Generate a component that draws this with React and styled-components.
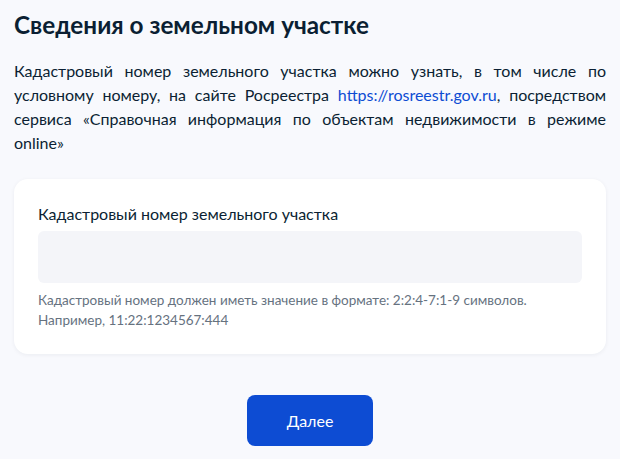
import styled, { createGlobalStyle } from "styled-components";

const GlobalStyle = createGlobalStyle`
  html, body {
    margin: 0;
    padding: 0;
    background: #f8f9fd;
  }
  body {
    font-family: Lato, "Noto Sans", sans-serif;
    color: #0b1f33;
  }
`;

const Page = () => {
  return (
    <Wrapper>
      <GlobalStyle />
      <h1 className="title">Сведения о земельном участке</h1>
      <p className="intro">
        Кадастровый номер земельного участка можно узнать, в том числе по
        условному номеру, на сайте Росреестра{" "}
        <a href="#rosreestr">https://rosreestr.gov.ru</a>, посредством сервиса
        «Справочная информация по объектам недвижимости в режиме online»
      </p>
      <Card>
        <Label htmlFor="cadastral">Кадастровый номер земельного участка</Label>
        <Input id="cadastral" type="text" />
        <Hint>
          Кадастровый номер должен иметь значение в формате: 2:2:4-7:1-9
          символов.
          <br />
          Например, 11:22:1234567:444
        </Hint>
      </Card>
      <Actions>
        <Button type="button">Далее</Button>
      </Actions>
    </Wrapper>
  );
};

const Wrapper = styled.main`
  width: 592px;
  padding: 9px 14px 0;

  .title {
    margin: 0;
    font-size: 24.3px;
    line-height: 32px;
    font-weight: 700;
    color: #0b1f33;
  }
  .intro {
    margin: 18px 0 0;
    font-size: 16px;
    line-height: 24px;
    text-align: justify;
    color: #0b1f33;
    a {
      color: #0d4cd3;
      text-decoration: none;
    }
  }
`;

const Card = styled.section`
  margin-top: 24px;
  background: #ffffff;
  border-radius: 14px;
  box-shadow: 0 1px 4px rgba(11, 31, 51, 0.06);
  padding: 25px 24px 24px;
  display: flex;
  flex-direction: column;
`;

const Label = styled.label`
  font-size: 16px;
  line-height: 20px;
  color: #0b1f33;
`;

const Input = styled.input`
  margin-top: 7px;
  height: 52px;
  border: none;
  border-radius: 6px;
  background: #f4f5f9;
  padding: 0 16px;
  font: inherit;
  outline: none;
`;

const Hint = styled.p`
  margin: 7px 0 0;
  font-size: 13.5px;
  line-height: 20px;
  color: #66727f;
`;

const Actions = styled.div`
  display: flex;
  justify-content: center;
  margin-top: 41px;
`;

const Button = styled.button`
  width: 126px;
  height: 51px;
  border: none;
  border-radius: 8px;
  background: #0d4cd3;
  color: #ffffff;
  font-family: Lato, "Noto Sans", sans-serif;
  font-size: 16px;
  cursor: pointer;
`;

export default Page;
